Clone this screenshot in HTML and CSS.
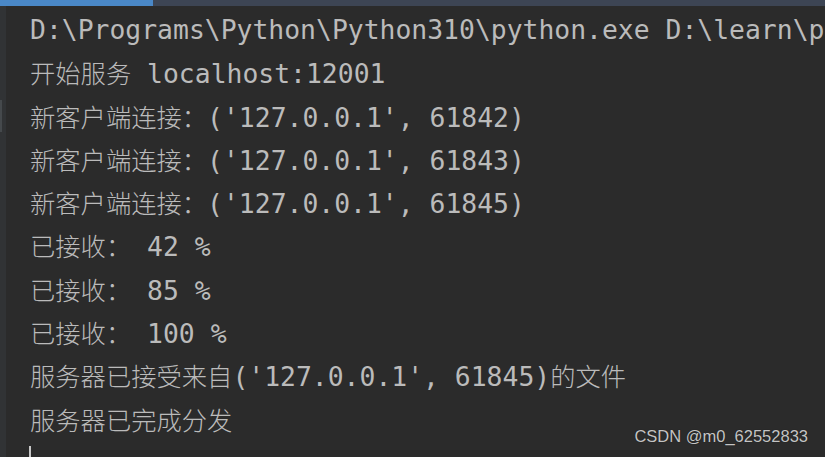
FILE: index.html
```html
<!DOCTYPE html>
<html>
<head>
  <title>Run - server</title>
  <link rel="stylesheet" href="styles.css">
</head>
<body>
  <div class="window">
    <div class="loadbar"><div class="loadbar-fill"></div></div>
    <div class="panel">
      <div class="gutter"><div class="gutter-thumb"></div></div>
      <div class="console">
        <div class="line">D:\Programs\Python\Python310\python.exe D:\learn\python\server.py</div>
        <div class="line"><span class="zh">开始服务</span> localhost:12001</div>
        <div class="line"><span class="zh">新客户端连接：</span>('127.0.0.1', 61842)</div>
        <div class="line"><span class="zh">新客户端连接：</span>('127.0.0.1', 61843)</div>
        <div class="line"><span class="zh">新客户端连接：</span>('127.0.0.1', 61845)</div>
        <div class="line"><span class="zh">已接收：</span> 42 %</div>
        <div class="line"><span class="zh">已接收：</span> 85 %</div>
        <div class="line"><span class="zh">已接收：</span> 100 %</div>
        <div class="line"><span class="zh">服务器已接受来自</span>('127.0.0.1', 61845)<span class="zh">的文件</span></div>
        <div class="line"><span class="zh">服务器已完成分发</span></div>
        <div class="line"><span class="caret"></span></div>
      </div>
    </div>
    <div class="watermark">CSDN @m0_62552833</div>
  </div>
</body>
</html>
```

FILE: styles.css
```css
:root {
  --bg: #2b2b2b;
  --gutter: #313335;
  --text: #bbbbbb;
  --bar: #3d4554;
  --accent: #4a88c7;
}

body {
  margin: 0;
  background: var(--bg);
  overflow: hidden;
}

.window {
  position: relative;
  width: 825px;
  height: 457px;
  overflow: hidden;
  background: var(--bg);
}

.loadbar {
  height: 6px;
  background: var(--bar);
}

.loadbar-fill {
  width: 153px;
  height: 100%;
  background: var(--accent);
}

.panel {
  display: flex;
  height: 451px;
}

.gutter {
  width: 6px;
  flex: 0 0 6px;
  background: var(--gutter);
  padding-top: 94px;
  box-sizing: border-box;
}

.gutter-thumb {
  width: 2px;
  height: 32px;
  background: #45494c;
}

.console {
  flex: 1;
  min-width: 0;
  overflow: hidden;
  padding: 2px 0 0 24px;
  color: var(--text);
  font-family: 'DejaVu Sans Mono', 'Liberation Mono', monospace;
  font-size: 26.4px;
  line-height: 43.3px;
}

.line {
  height: 43.3px;
  white-space: pre;
}

.zh {
  font-family: 'Noto Sans CJK SC', sans-serif;
  font-size: 25.3px;
  font-weight: 300;
}

.caret {
  display: inline-block;
  width: 2px;
  height: 20px;
  margin-left: -1px;
  vertical-align: 6px;
  background: #c8c8c8;
}

.watermark {
  position: absolute;
  right: 17px;
  bottom: 11px;
  font-family: 'Liberation Sans', Arial, sans-serif;
  font-size: 16.5px;
  color: #c4c4c4;
  text-shadow: 0 0 1px rgba(0, 0, 0, 0.6);
}
```
